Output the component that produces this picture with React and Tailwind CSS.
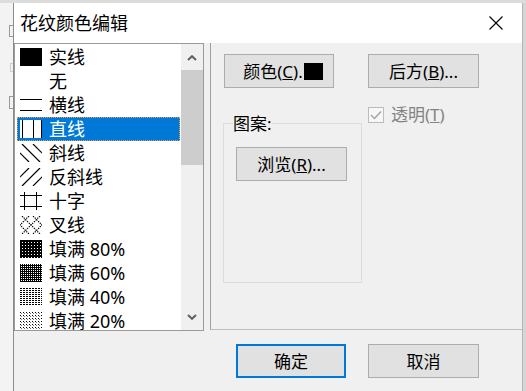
import React from "react";

const FONT = "font-['Noto_Sans','Noto_Sans_CJK_SC',sans-serif]";

function PatIcon({ k }) {
  if (k === "none") return <div className="w-[22px] h-[18px] shrink-0" />;
  let body = null;
  if (k === "solid") {
    body = <rect x="0" y="0" width="22" height="18" fill="#000" />;
  } else if (k === "h") {
    body = (
      <g shapeRendering="crispEdges">
        <rect x="0" y="3" width="22" height="1.3" fill="#000" />
        <rect x="0" y="14" width="22" height="1.3" fill="#000" />
      </g>
    );
  } else if (k === "v") {
    body = (
      <g shapeRendering="crispEdges">
        <rect x="0" y="0" width="22" height="18" fill="#fff" />
        <rect x="2" y="0" width="1.3" height="18" fill="#000" />
        <rect x="13" y="0" width="1.3" height="18" fill="#000" />
        <rect x="20.5" y="0" width="1.3" height="18" fill="#000" />
      </g>
    );
  } else if (k === "bd") {
    body = (
      <g stroke="#000" strokeWidth="1.2">
        <line x1="-9" y1="0" x2="9" y2="18" />
        <line x1="2" y1="0" x2="20" y2="18" />
        <line x1="13" y1="0" x2="31" y2="18" />
      </g>
    );
  } else if (k === "fd") {
    body = (
      <g stroke="#000" strokeWidth="1.2">
        <line x1="9" y1="0" x2="-9" y2="18" />
        <line x1="20" y1="0" x2="2" y2="18" />
        <line x1="31" y1="0" x2="13" y2="18" />
      </g>
    );
  } else if (k === "cross") {
    body = (
      <g shapeRendering="crispEdges" fill="#000">
        <rect x="0" y="3" width="22" height="1.3" />
        <rect x="0" y="14" width="22" height="1.3" />
        <rect x="4" y="0" width="1.3" height="18" />
        <rect x="16" y="0" width="1.3" height="18" />
      </g>
    );
  } else if (k === "x") {
    body = (
      <g stroke="#000" strokeWidth="1.1" strokeDasharray="1.4 1">
        <line x1="-9" y1="0" x2="9" y2="18" />
        <line x1="2" y1="0" x2="20" y2="18" />
        <line x1="13" y1="0" x2="31" y2="18" />
        <line x1="9" y1="0" x2="-9" y2="18" />
        <line x1="20" y1="0" x2="2" y2="18" />
        <line x1="31" y1="0" x2="13" y2="18" />
      </g>
    );
  } else {
    const defs = {
      p80: (
        <pattern id="p80" width="3" height="3" patternUnits="userSpaceOnUse">
          <rect width="3" height="3" fill="#000" />
          <rect x="2" y="2" width="1" height="1" fill="#fff" />
        </pattern>
      ),
      p60: (
        <pattern id="p60" width="2" height="2" patternUnits="userSpaceOnUse">
          <rect width="2" height="2" fill="#000" />
          <rect x="1" y="0" width="1" height="1" fill="#fff" />
        </pattern>
      ),
      p40: (
        <pattern id="p40" width="3" height="2" patternUnits="userSpaceOnUse">
          <rect width="3" height="2" fill="#fff" />
          <rect x="0" y="0" width="2" height="1" fill="#000" />
        </pattern>
      ),
      p20: (
        <pattern id="p20" width="3" height="3" patternUnits="userSpaceOnUse">
          <rect width="3" height="3" fill="#fff" />
          <rect x="0" y="0" width="1" height="1" fill="#000" />
          <rect x="1" y="1" width="1" height="1" fill="#777" />
        </pattern>
      ),
    };
    body = (
      <g shapeRendering="crispEdges">
        <defs>{defs[k]}</defs>
        <rect x="0" y="0" width="22" height="18" fill={`url(#${k})`} />
      </g>
    );
  }
  return (
    <svg width="22" height="18" viewBox="0 0 22 18" className="shrink-0 overflow-hidden">
      {body}
    </svg>
  );
}

const items = [
  { k: "solid", t: "实线" },
  { k: "none", t: "无" },
  { k: "h", t: "横线" },
  { k: "v", t: "直线", sel: true },
  { k: "bd", t: "斜线" },
  { k: "fd", t: "反斜线" },
  { k: "cross", t: "十字" },
  { k: "x", t: "叉线" },
  { k: "p80", t: "填满 80%" },
  { k: "p60", t: "填满 60%" },
  { k: "p40", t: "填满 40%" },
  { k: "p20", t: "填满 20%" },
];

function Chevron({ up }) {
  return (
    <svg width="10" height="6" viewBox="0 0 10 6">
      <polyline
        points={up ? "1,5 5,1.2 9,5" : "1,1 5,4.8 9,1"}
        fill="none"
        stroke="#606060"
        strokeWidth="2"
      />
    </svg>
  );
}

function Btn({ children, w, def }) {
  return (
    <div
      className={`${w} h-[34px] shrink-0 flex items-center justify-center bg-[#e1e1e1] text-[17px] leading-none text-black ${
        def ? "border-2 border-[#0078d7]" : "border border-[#adadad]"
      }`}
    >
      {children}
    </div>
  );
}

export default function App() {
  return (
    <div className={`w-[526px] h-[391px] overflow-hidden flex flex-col bg-[#e4e4e4] ${FONT}`}>
      <div className="h-[3px] shrink-0 bg-[#dcdcdc]" />
      <div className="flex flex-1 min-h-0">
        {/* background app strip */}
        <div className="w-[13px] shrink-0 bg-[#f3f3f3] flex flex-col items-end">
          <div className="mt-[22px] w-[4px] h-[12px] border border-r-0 border-[#9a9a9a]" />
          <div className="mt-[26px] w-[3px] h-[9px] border border-r-0 border-[#cfcfcf]" />
          <div className="mt-[24px] w-[4px] h-[13px] border border-r-0 border-[#9a9a9a]" />
        </div>

        {/* dialog */}
        <div className="w-[510px] shrink-0 flex flex-col border-l border-r border-l-[#8c8c8c] border-r-[#b4b4b4] bg-[#f0f0f0]">
          {/* title bar */}
          <div className="h-[40px] shrink-0 bg-white flex items-center justify-between pl-[6px] pr-[19px]">
            <span className="text-[18px] leading-none text-black">花纹颜色编辑</span>
            <svg width="14" height="14" viewBox="0 0 14 14">
              <path d="M0.5 0.5 L13.5 13.5 M13.5 0.5 L0.5 13.5" stroke="#000" strokeWidth="1.1" fill="none" />
            </svg>
          </div>

          {/* upper area */}
          <div className="h-[288px] shrink-0 flex items-start">
            {/* list box */}
            <div className="w-[190px] h-[288px] shrink-0 border border-[#9a9a9a] flex">
              <div className="flex-1 bg-white pl-[2px] pr-[1px] pt-[1px] flex flex-col overflow-hidden">
                {items.map((it) => (
                  <div
                    key={it.t}
                    className={`h-[24px] shrink-0 flex items-center pl-[3px] text-[18px] leading-none ${
                      it.sel
                        ? "bg-[#0078d7] text-white outline-1 outline-dotted -outline-offset-1 outline-[#e9a04a]"
                        : "text-black"
                    }`}
                  >
                    <PatIcon k={it.k} />
                    <span className="ml-[7px] whitespace-pre">{it.t}</span>
                  </div>
                ))}
              </div>
              <div className="w-[22px] shrink-0 bg-[#f0f0f0] flex flex-col">
                <div className="h-[26px] shrink-0 flex items-center justify-center pt-[2px]">
                  <Chevron up />
                </div>
                <div className="h-[95px] shrink-0 bg-[#cdcdcd]" />
                <div className="mt-auto h-[26px] shrink-0 flex items-center justify-center">
                  <Chevron />
                </div>
              </div>
            </div>

            {/* right panel */}
            <div className="flex-1 ml-[6px] h-[287px] border-l border-b border-l-[#a0a0a0] border-b-[#bdbdbd] pl-[12px] pt-[11px] flex gap-[6px]">
              <div className="w-[139px] shrink-0 flex flex-col">
                <div className="ml-[1px]">
                  <Btn w="w-[110px]">
                    <span className="pl-[8px]">
                      颜色(<span className="underline">C</span>).
                    </span>
                    <span className="ml-[1px] w-[19px] h-[17px] bg-black" />
                  </Btn>
                </div>
                <div className="mt-[35px] w-[139px] h-[160px] border border-[#dcdcdc] relative">
                  <span className="absolute left-[9px] -top-[9px] bg-[#f0f0f0] text-[17px] leading-none text-black">
                    图案:
                  </span>
                  <div className="mt-[23px] ml-[12px]">
                    <Btn w="w-[111px]">
                      浏览(<span className="underline">R</span>)...
                    </Btn>
                  </div>
                </div>
              </div>
              <div className="flex flex-col">
                <Btn w="w-[111px]">
                  后方(<span className="underline">B</span>)...
                </Btn>
                <div className="mt-[18px] flex items-center">
                  <div className="w-[16px] h-[16px] border border-[#bcbcbc] bg-[#f7f7f7] flex items-center justify-center">
                    <svg width="12" height="10" viewBox="0 0 12 10">
                      <polyline points="1,5 4.5,8.5 11,1.5" fill="none" stroke="#a3a3a3" strokeWidth="1.4" />
                    </svg>
                  </div>
                  <span className="ml-[7px] text-[17px] leading-none text-[#838383]">
                    透明(<span className="underline">T</span>)
                  </span>
                </div>
              </div>
            </div>
          </div>

          {/* bottom buttons */}
          <div className="flex-1 pt-[13px] pl-[222px] flex items-start gap-[22px]">
            <Btn w="w-[110px]" def>
              确定
            </Btn>
            <Btn w="w-[111px]">取消</Btn>
          </div>
        </div>

        <div className="w-[3px] shrink-0 bg-[#d6d6d6]" />
      </div>
    </div>
  );
}
